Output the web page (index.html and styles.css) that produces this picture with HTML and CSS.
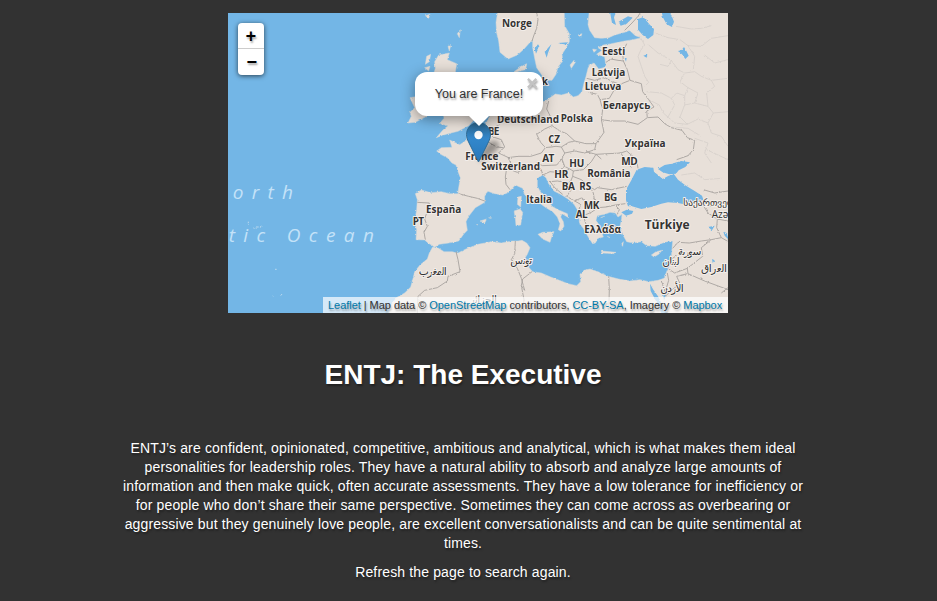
FILE: index.html
```html
<!DOCTYPE html>
<html lang="en">
<head>
<meta charset="utf-8">
<title>ENTJ: The Executive</title>
<link rel="stylesheet" href="styles.css">
</head>
<body>
<main class="page">
  <div class="map">
    <svg class="tiles" viewBox="0 0 1500 900" width="500" height="300">
      <defs>
        <filter id="rough" filterUnits="userSpaceOnUse" x="-20" y="-20" width="1540" height="940">
          <feTurbulence type="fractalNoise" baseFrequency="0.12" numOctaves="2" seed="4"/>
          <feDisplacementMap in="SourceGraphic" scale="7" xChannelSelector="R" yChannelSelector="G"/>
        </filter>
      </defs>
      <g filter="url(#rough)">
        <g class="land">
          <!-- Continental Europe, the Levant and North Africa -->
          <path d="M1530-20H1085L1080 35 1085 52 1100 74 1120 76 1142 74 1160 66 1190 58 1205 52 1222 68 1240 74 1215 80 1190 84 1150 92 1126 96 1110 104 1122 112 1106 124 1130 132 1134 162 1112 168 1098 150 1082 158 1074 190 1068 210 1062 236 1050 248 1036 252 1022 240 1000 246 982 243 955 262 940 268 925 262 910 250 895 235 893 200 896 178 858 176 878 162 896 152 893 170 870 175 850 200 850 250 820 280 785 310 772 335 750 348 715 362 716 382 695 395 676 386 665 381 672 403 640 404 626 414 638 424 658 434 672 450 684 456 688 470 697 494 691 530 690 542 665 542 640 536 608 539 580 531 562 542 568 560 566 590 560 626 566 650 564 680 590 681 600 690 612 697 620 703 634 694 662 690 692 684 708 662 718 652 714 626 722 610 742 584 770 568 770 546 780 535 800 542 824 546 842 538 862 516 884 526 890 545 908 560 934 570 954 584 974 596 988 612 996 632 991 650 998 654 1008 640 1006 626 998 612 1002 602 1022 614 1018 602 990 590 972 580 958 556 938 538 928 520 928 496 944 486 954 494 962 512 978 534 1000 545 1020 558 1038 574 1048 590 1052 612 1056 634 1066 646 1076 664 1086 680 1094 692 1102 690 1110 676 1126 672 1118 650 1112 634 1104 622 1108 608 1130 604 1146 598 1162 600 1170 612 1182 604 1180 622 1176 640 1186 668 1196 686 1216 690 1240 686 1256 698 1282 700 1304 690 1318 686 1334 684 1332 706 1330 738 1320 766 1308 796 1290 802 1262 806 1236 800 1206 804 1172 798 1140 790 1110 776 1086 768 1068 772 1056 784 1058 806 1046 818 1020 812 994 802 968 792 940 780 914 776 900 760 888 740 898 724 906 704 896 690 882 682 870 684 852 684 820 690 790 686 750 694 714 708 690 720 672 716 648 716 632 706 614 702 604 720 598 738 576 756 560 776 554 800 548 822 530 840 505 854 490 875 478 920H1530Z"/>
          <!-- Scandinavia -->
          <path d="M812-20 804 28 806 60 812 84 816 118 840 138 868 126 888 108 904 90 914 80 914 104 920 136 926 164 940 184 946 202 972 202 984 184 990 162 1004 144 1002 124 1012 108 1024 86 1024 62 1010 38 1008-20Z"/>
          <!-- Britain and Ireland -->
          <path d="M632 126 664 120 658 140 686 152 682 178 700 210 710 260 742 290 746 312 722 338 690 355 660 362 640 368 625 374 644 352 660 338 634 332 648 316 640 260 616 186 622 166 620 146Z"/>
          <path d="M546 254 590 246 606 280 596 310 562 328 540 330 550 310 546 298 560 284Z"/>
          <path d="M596 130 608 124 604 146 592 154ZM590 164 606 160 602 174ZM688 62 697 50 694 74ZM660 100 668 98 664 114ZM592 8 606 4 602 16Z"/>
          <!-- Mediterranean islands -->
          <path d="M930 664 944 658 978 656 970 674 966 688 944 678ZM858 594 876 588 884 598 878 636 864 638 862 616ZM870 552 880 550 878 582 868 574Z"/>
          <path d="M1120 714 1164 718 1160 722 1122 720ZM1270 726 1284 716 1302 712 1292 724 1278 732ZM756 624 776 618 770 630ZM782 614 790 616ZM744 632 750 636Z"/>
          <path d="M1124 642 1132 648ZM1148 636 1158 640 1152 644ZM1158 656 1166 658ZM1138 670 1146 674ZM1180 694 1186 686 1184 700ZM1118 614 1130 610Z"/>
          <path d="M1026 156 1038 142 1042 148 1030 166ZM1094 108 1106 110 1098 118ZM1050 66 1062 62 1058 72Z"/>
        </g>
        <g class="water">
          <path d="M1194 562 1194 530 1210 502 1226 470 1250 462 1276 464 1278 476 1290 486 1304 498 1322 488 1338 484 1350 500 1374 518 1400 534 1422 548 1426 560 1410 570 1380 576 1350 570 1320 568 1300 572 1270 582 1240 588 1212 580 1200 580Z"/>
          <path d="M1290 468 1310 456 1330 452 1360 444 1386 448 1372 462 1352 472 1344 482 1324 484 1304 478Z"/>
          <path d="M1180 598 1196 590 1216 594 1212 602 1194 608Z"/>
          <path d="M1230 18 1246 12 1264 34 1278 48 1276 66 1260 78 1244 66 1230 50ZM1302 0 1326-4 1338 26 1332 42 1316 34 1304 12Z"/>
          <path d="M1350 114 1360 112 1368 102 1374 112 1382 128 1372 138 1362 124ZM1246 128 1258 124 1256 134ZM1190 136 1196 134 1194 146ZM1146-4 1162 0 1158 14 1164 36 1152 30ZM1172 26 1200 10 1214 14 1196 32 1178 38Z"/>
          <path d="M920 106 930 94 934 100 924 122ZM950 116 970 94 960 120 956 134ZM990 90 1020 88 1014 96Z"/>
          <path d="M1440 642 1460 638 1452 652ZM1486 656 1496 660 1502 680 1490 668ZM1452 738 1460 742 1454 750ZM1266 812 1276 830 1290 850 1300 870 1320 900 1300 900 1284 864 1268 834ZM1306 846 1314 844 1308 866Z"/>
        </g>
        <g class="region">
          <path d="M1234 68 1250 96 1238 112 1230 130 1240 160 1250 190 1262 208 1250 220M1262 96 1290 120 1330 142 1320 160 1296 154M1330 142 1350 170 1370 180 1400 176 1420 190 1450 202 1500 196M1280 60 1320 74 1356 80 1380 98 1420 100 1450 76 1500 68M1344 40 1390 48 1420 46 1450 38M1380 98 1400 130 1396 170M1370 180 1356 206 1380 224 1370 248 1346 240 1330 256 1300 240 1256 236M1380 224 1410 240 1400 270 1370 276 1370 248M1400 270 1440 280 1456 300 1440 330 1410 318 1378 334 1356 312 1370 276M1440 280 1436 240 1460 220 1450 202M1456 300 1500 296M1440 330 1450 360 1480 370 1500 400M1400 376 1440 390 1430 420 1450 450M1320 312 1340 276 1330 256M1262 260 1294 276 1306 300 1340 330 1378 334M1330 342 1380 346 1420 370M1430 126 1460 150 1500 140M1436 410 1500 440M1360 486 1400 480 1430 500 1480 496"/>
        </g>
        <g class="border">
          <!-- Nordic and Baltic states -->
          <path d="M924-10 930 20 926 46 918 66 912 84M1190 52 1212 30 1230 10 1240-6M1134 148 1148 138 1170 142 1186 144 1184 120 1196 92M1186 144 1198 170 1206 202M1076 196 1100 202 1130 194 1154 206 1176 214 1206 202 1240 212 1244 236 1262 260 1278 282 1256 294 1258 314M1154 206 1158 232 1144 256 1116 260 1108 244 1082 238M1116 260 1124 290 1120 320 1150 324 1190 324 1230 334 1258 314 1290 312 1310 332 1330 344 1362 352 1378 374 1400 382 1396 410 1380 428 1346 440"/>
          <!-- Central Europe -->
          <path d="M962 264 956 288 968 312 972 338 996 354 1016 362 1040 384 1074 392 1104 392 1128 358 1120 320M972 338 950 348 926 364 938 388 952 404 984 400 1000 402 1022 388 1040 384M1000 402 1010 420 1040 414 1070 420 1100 410 1104 392M952 404 940 420 908 430 870 430 840 434 848 450 836 466M774 348 798 346 812 336 820 316M774 348 796 372 820 380 830 402 812 420 846 436M750 364 776 384 806 402 826 404M836 466 832 492 834 514 846 530M836 466 868 478 884 470 910 468 940 470 944 486M1010 420 1002 438 986 456 944 458 924 450M1002 438 1010 460 1036 474 1066 470 1090 446 1104 424 1074 416M1104 424 1140 422 1178 420 1196 414 1226 440 1230 466M1178 420 1196 446 1210 464M1104 424 1120 438M944 486 966 476 986 478 1010 460M966 506 988 504 1026 510 1034 490 1036 474M966 506 980 524 1004 544M1026 510 1030 530 1016 550 1040 564M1034 490 1060 500 1086 522 1100 530 1108 524 1150 530 1196 520M1086 522 1096 540 1100 566 1076 574 1062 554 1040 564M1100 566 1110 584 1134 582 1162 576 1192 572M1040 564 1058 574 1052 592 1066 608 1074 634M1110 584 1090 598 1066 608M1162 576 1174 590 1168 604"/>
          <!-- Iberia and North Africa -->
          <path d="M692 542 722 550 748 556 770 564M568 568 604 570 598 594 590 618 598 640 588 658 592 680M684 716 690 740 696 776 660 790 658 804 628 824 590 832 570 850 568 900M862 684 860 722 850 740 868 766 880 796 890 832 880 818 884 798 912 776M880 818 888 860 884 900M1142 790 1144 830 1142 900"/>
          <!-- Turkey and the Middle East -->
          <path d="M1334 706 1350 688 1384 690 1420 684 1450 680 1480 674 1466 644 1468 618 1440 600 1420 568M1420 568 1450 580 1480 576 1508 584M1468 618 1500 624M1480 674 1508 690M1450 680 1420 704 1424 730 1378 766 1340 780 1322 768M1378 766 1380 782 1430 804 1500 830M1378 782 1346 790 1356 812 1330 832 1314 848M1330 738 1346 728M1318 780 1322 802 1312 836M1300 804 1312 840 1314 850M1480 840 1500 824M1426 530 1460 540 1500 534"/>
        </g>
        <!-- Azores and Madeira -->
        <path class="islets" d="M61 626V632M76 645H82M84 642H92M97 644 99 638M140 769H146M136 850V846M158 848 162 843"/>
      </g>
      <g class="ocean">
        <text x="14" y="557" textLength="181">orth</text>
        <text x="2" y="688" textLength="109">tic</text>
        <text x="176" y="688" textLength="262">Ocean</text>
      </g>
      <g class="label">
        <text x="822" y="42" textLength="90">Norge</text>
        <text x="941" y="216">k</text>
        <text x="1122" y="126" textLength="70">Eesti</text>
        <text x="1091" y="189" textLength="101">Latvija</text>
        <text x="1070" y="230" textLength="110">Lietuva</text>
        <text x="1124" y="287" textLength="143">Беларусь</text>
        <text x="807" y="329" textLength="186">Deutschland</text>
        <text x="998" y="327" textLength="97">Polska</text>
        <text x="780" y="366" textLength="34">BE</text>
        <text x="961" y="389" textLength="35">CZ</text>
        <text x="712" y="440" textLength="99">France</text>
        <text x="943" y="446" textLength="36">AT</text>
        <text x="1190" y="402" textLength="123">Україна</text>
        <text x="1024" y="461" textLength="45">HU</text>
        <text x="1180" y="456" textLength="49">MD</text>
        <text x="760" y="471" textLength="176">Switzerland</text>
        <text x="979" y="495" textLength="42">HR</text>
        <text x="1078" y="491" textLength="130">România</text>
        <text x="1001" y="530" textLength="40">BA</text>
        <text x="1054" y="530" textLength="36">RS</text>
        <text x="1128" y="563" textLength="40">BG</text>
        <text x="895" y="569" textLength="77">Italia</text>
        <text x="1067" y="589" textLength="47">MK</text>
        <text x="1043" y="614" textLength="36">AL</text>
        <text x="594" y="599" textLength="106">España</text>
        <text x="554" y="635" textLength="34">PT</text>
        <text x="1069" y="660" textLength="110">Ελλάδα</text>
        <text class="big" x="1250" y="649" textLength="135">Türkiye</text>
      </g>
      <g class="minor">
        <text class="ge" x="1366" y="580">საქართველო</text>
        <text class="az" x="1451" y="616">Azərbaycan</text>
        <text x="880" y="752" text-anchor="middle" textLength="66">تونس</text>
        <text x="614" y="787" text-anchor="middle" textLength="84">المغرب</text>
        <text x="766" y="870" text-anchor="middle" textLength="82">الجزائر</text>
        <text x="1385" y="725" text-anchor="middle" textLength="70">سورية</text>
        <text x="1329" y="757" text-anchor="middle" textLength="52">لبنان</text>
        <text x="1458" y="776" text-anchor="middle" textLength="78">العراق</text>
        <text x="1332" y="836" text-anchor="middle" textLength="70">الأردن</text>
      </g>
    </svg>

    <svg class="marker" viewBox="0 0 70 45" width="70" height="45">
      <defs>
        <linearGradient id="pin" x1="0" y1="0" x2="0" y2="1">
          <stop offset="0" stop-color="#2e6c97"/>
          <stop offset=".4" stop-color="#3388cc"/>
          <stop offset="1" stop-color="#2877b9"/>
        </linearGradient>
        <filter id="soft" x="-30%" y="-30%" width="160%" height="160%"><feGaussianBlur stdDeviation="2.5"/></filter>
      </defs>
      <path d="M13 40C14 28 22 17 30 19 40 24 24 34 13 40Z" fill="#000" opacity=".35" filter="url(#soft)"/>
      <path d="M12.500.5C5.600.5.5 6.300.5 12.600c0 3 1.300 6 2.500 8.300L12.500 40 22 20.900c1.200-2.300 2.500-5.300 2.500-8.300C24.500 6.300 19.400.5 12.500.5Z" fill="url(#pin)" stroke="#2e6c97"/>
      <circle cx="12.500" cy="13" r="4.200" fill="#fff"/>
    </svg>

    <div class="popup">
      <div class="popup-body">You are France!</div>
      <div class="popup-tip"></div>
      <span class="popup-close">×</span>
    </div>

    <div class="zoom">
      <span class="zoom-button">+</span>
      <span class="zoom-button zoom-out">−</span>
    </div>

    <div class="attribution"><a>Leaflet</a> | Map data © <a>OpenStreetMap</a> contributors, <a>CC-BY-SA</a>, Imagery © <a>Mapbox</a></div>
  </div>

  <h1 class="title">ENTJ: The Executive</h1>
  <p class="text">ENTJ’s are confident, opinionated, competitive, ambitious and analytical, which is what makes them ideal<br>personalities for leadership roles. They have a natural ability to absorb and analyze large amounts of<br>information and then make quick, often accurate assessments. They have a low tolerance for inefficiency or<br>for people who don’t share their same perspective. Sometimes they can come across as overbearing or<br>aggressive but they genuinely love people, are excellent conversationalists and can be quite sentimental at<br>times.</p>
  <p class="text">Refresh the page to search again.</p>
</main>
</body>
</html>
```
FILE: styles.css
```css
body {
  margin: 0;
  background: #323232;
  color: #fff;
  font-family: "Liberation Sans", Arial, sans-serif;
  font-size: 14px;
  line-height: 19px;
  text-shadow: 1px 2px 2px rgba(0, 0, 0, 0.35);
  overflow: hidden;
}

.page {
  width: 926px;
  padding-top: 13px;
  text-align: center;
}

.map {
  position: relative;
  width: 500px;
  height: 300px;
  margin: 0 0 0 228px;
  overflow: hidden;
  background: #73b6e6;
}

.tiles {
  display: block;
  text-shadow: none;
}

.land {
  fill: #e8e0d9;
  stroke: #d5d8d9;
  stroke-width: 1.5;
}

.water {
  fill: #73b6e6;
}

.border {
  fill: none;
  stroke: #a5a09c;
  stroke-width: 2.6;
}

.region {
  fill: none;
  stroke: #d2ccc7;
  stroke-width: 2;
}

.islets {
  fill: none;
  stroke: #b9d8ee;
  stroke-width: 3;
}

.ocean {
  fill: #c4e2f8;
  font: italic 57px "Open Sans", sans-serif;
}

.label {
  fill: #333;
  stroke: #f3eeea;
  stroke-width: 6;
  stroke-linejoin: round;
  paint-order: stroke;
  font: 700 30px "Open Sans", "Noto Sans", sans-serif;
}

.label .big {
  font-size: 36px;
}

.minor {
  fill: #333;
  stroke: #f3eeea;
  stroke-width: 6;
  stroke-linejoin: round;
  paint-order: stroke;
  font: 32px "DejaVu Sans", sans-serif;
}

.minor .az {
  font: 30px "Open Sans", sans-serif;
}

.minor .ge {
  font-size: 28px;
}

.marker {
  position: absolute;
  left: 238px;
  top: 109px;
}

.popup {
  position: absolute;
  left: 187px;
  top: 59px;
  width: 128px;
  color: #333;
  filter: drop-shadow(0 3px 7px rgba(0, 0, 0, 0.4));
}

.popup-body {
  height: 44px;
  line-height: 44px;
  border-radius: 12px;
  background: #fff;
  font-size: 12.5px;
  white-space: nowrap;
}

.popup-tip {
  width: 22px;
  height: 11px;
  margin: -1px auto 0;
  background: #fff;
  clip-path: polygon(0 0, 100% 0, 50% 100%);
}

.popup-close {
  position: absolute;
  right: 5px;
  top: 2px;
  color: #c3c3c3;
  font: bold 20px/18px "Liberation Sans", sans-serif;
}

.zoom {
  position: absolute;
  left: 10px;
  top: 10px;
  width: 26px;
  border-radius: 4px;
  background: #fff;
  box-shadow: 0 1px 5px rgba(0, 0, 0, 0.65);
  color: #000;
}

.zoom-button {
  display: block;
  height: 25px;
  font: bold 18px/28px "Liberation Mono", monospace;
}

.zoom-out {
  height: 26px;
  border-top: 1px solid #ccc;
  text-indent: 2px;
}

.attribution {
  position: absolute;
  right: 0;
  bottom: 0;
  box-sizing: border-box;
  width: 405px;
  height: 16px;
  padding-left: 5px;
  background: rgba(255, 255, 255, 0.7);
  color: #333;
  font-size: 11px;
  line-height: 17px;
  letter-spacing: -0.04px;
  text-align: left;
  white-space: nowrap;
}

.attribution a {
  color: #0078a8;
}

.title {
  margin: 41px 0 44px;
  font-size: 28px;
  line-height: 41px;
}

.text {
  margin: 0 0 10px;
  letter-spacing: 0.142px;
  white-space: nowrap;
}
```
